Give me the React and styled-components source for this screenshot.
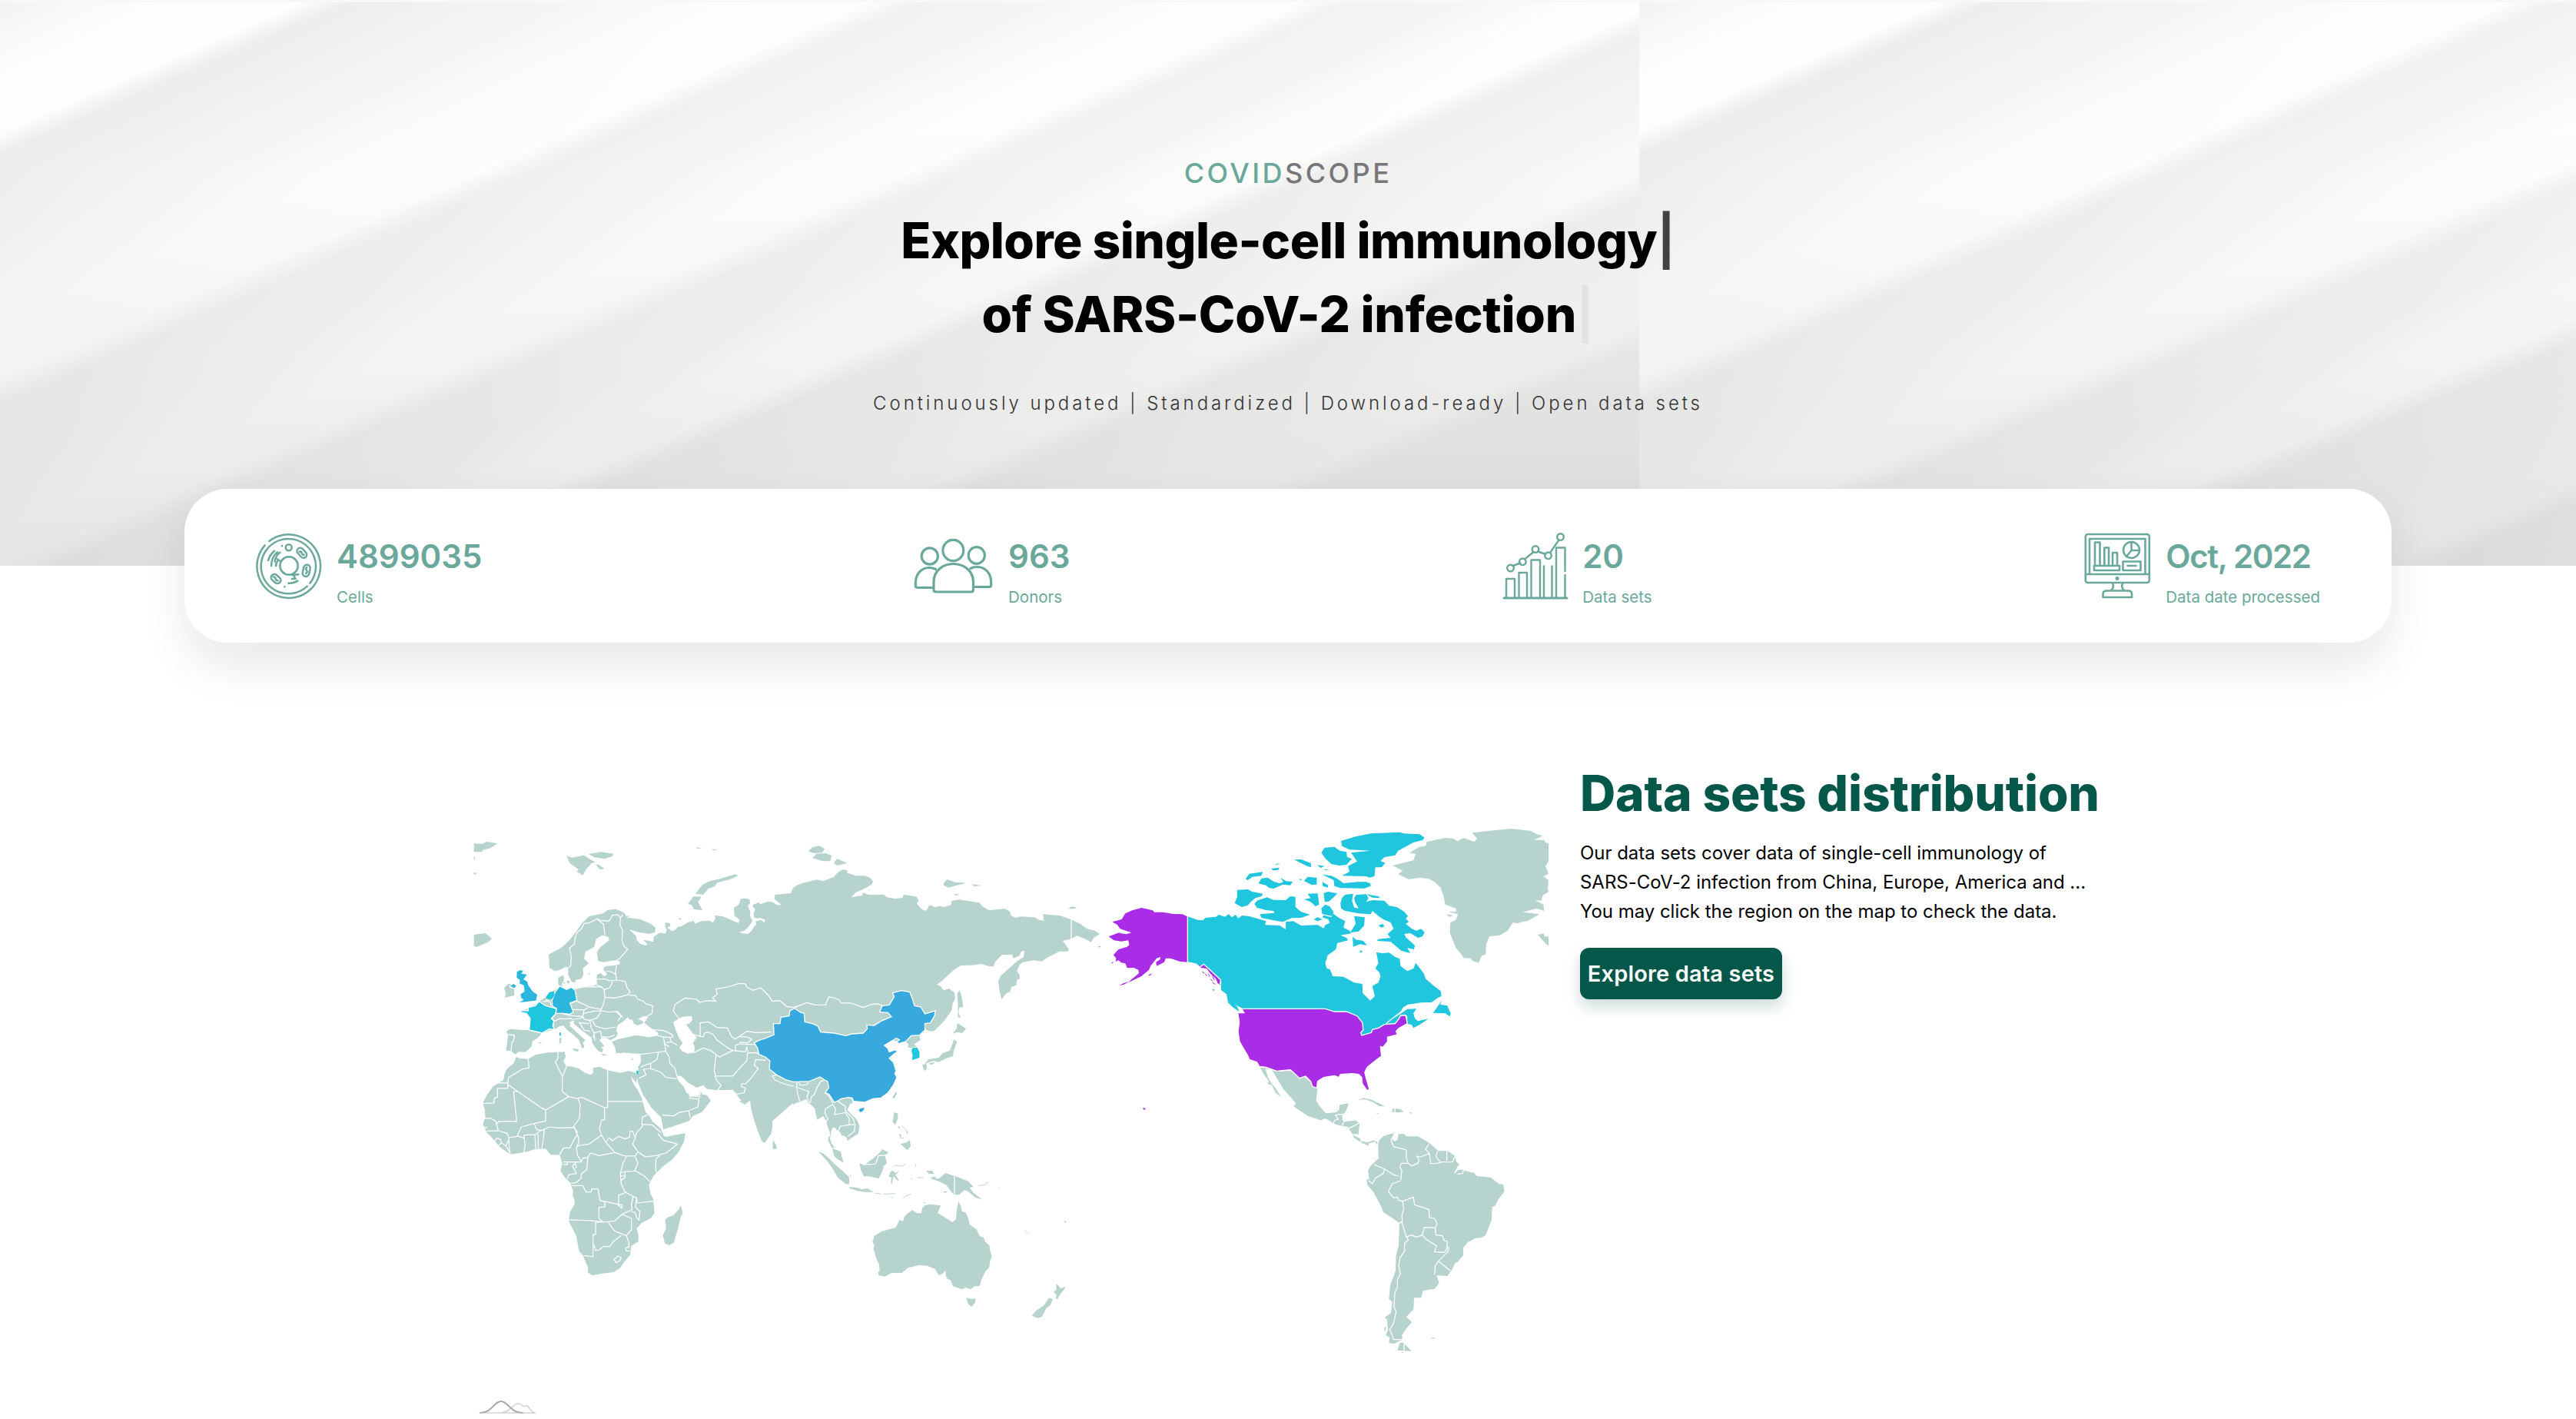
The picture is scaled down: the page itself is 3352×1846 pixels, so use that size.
import React from "react";
import styled, { createGlobalStyle } from "styled-components";

const teal = "#6ba89c";
const forest = "#045749";
const land = "#b7d3cd";
const cyan = "#20c5de";
const sky = "#2bb6de";
const blue = "#37a9df";
const purple = "#a92de6";

const GlobalStyle = createGlobalStyle`
  * { box-sizing: border-box; }
  body {
    margin: 0;
    background: #fff;
    font-family: Inter, "Liberation Sans", sans-serif;
  }
  h1, h2, p { margin: 0; }
`;

const Page = styled.main`
  display: flex;
  flex-direction: column;
  height: 1846px;
  overflow: hidden;
  background: #fff;
`;

const Hero = styled.header`
  display: flex;
  flex-direction: column;
  flex: none;
  align-items: center;
  height: 736px;
  border-top: 3px solid #f8f8f7;
  padding-top: 195px;
  background-image:
    linear-gradient(180deg, rgba(170, 170, 170, 0) 0%, rgba(170, 170, 170, 0.02) 30%, rgba(170, 170, 170, 0.12) 62%, rgba(170, 170, 170, 0.3) 100%),
    linear-gradient(
      156.4deg,
      #f3f3f2 0px, #fefefc 90px, #fefefc 155px,
      #eeeeed 182px, #f4f4f3 280px, #fdfdfb 380px, #fefefc 450px,
      #f1f1f0 480px, #f6f6f5 550px, #fefefc 630px, #fefefc 675px,
      #f2f2f1 704px, #f6f6f5 770px, #fdfdfb 820px, #fefefc 863px,
      #f0f0ef 892px, #f4f4f3 960px, #fafaf8 1030px, #fbfbf9 1058px,
      #efefee 1088px, #f6f6f5 1180px, #f8f8f7 1238px, #eeeeed 1266px
    );
  background-size: 100% 100%, 2133px 736px;
  background-repeat: no-repeat, repeat-x;
`;

const Brand = styled.p`
  font-size: 36px;
  font-weight: 500;
  line-height: 54px;
  letter-spacing: 3.45px;
  color: #77777a;
`;

const BrandAccent = styled.span`
  color: ${teal};
`;

const Title = styled.h1`
  margin-top: 13px;
  font-size: 64px;
  font-weight: 800;
  line-height: 96px;
  text-align: center;
  color: #000;
`;

const TitleLine = styled.span`
  display: block;
  letter-spacing: ${(p) => p.$tracking};
  white-space: nowrap;
`;

const Cursor = styled.span`
  font-weight: 700;
  color: ${(p) => (p.$faded ? "#e3e3e3" : "#424242")};
`;

const Tagline = styled.p`
  margin-top: 50px;
  font-size: 24px;
  font-weight: 300;
  line-height: 36px;
  letter-spacing: 3.92px;
  white-space: nowrap;
  color: #333;
`;

const StatsCard = styled.section`
  position: relative;
  display: flex;
  flex: none;
  justify-content: space-between;
  align-items: flex-start;
  height: 200px;
  margin: -100px 240px 0;
  padding: 57px 93px 0;
  border-radius: 56px;
  background: #fff;
  box-shadow: 0 30px 60px rgba(0, 0, 0, 0.09);
`;

const Stat = styled.div`
  display: flex;
  gap: 19px;
  color: ${teal};
`;

const StatIcon = styled.svg`
  width: ${(p) => p.$w}px;
  height: 86px;
  overflow: visible;
  fill: none;
  stroke: currentColor;
  stroke-width: ${(p) => p.$line || 3};
  stroke-linecap: round;
  stroke-linejoin: round;
`;

const StatText = styled.div`
  display: flex;
  flex-direction: column;
  padding-top: 1px;
  white-space: nowrap;
`;

const StatValue = styled.span`
  font-size: 42px;
  font-weight: 600;
  line-height: 60px;
  letter-spacing: ${(p) => (p.$tight ? "-1.4px" : "0")};
`;

const StatLabel = styled.span`
  margin-top: 8px;
  font-size: 20.5px;
  line-height: 30px;
`;

const Distribution = styled.section`
  display: flex;
  gap: 40px;
  padding: 156px 0 0 616px;
`;

const Map = styled.svg`
  flex: none;
  width: 1400px;
  height: 854px;
`;

const Area = styled.path`
  fill: ${(p) => p.$fill || land};
  stroke: ${(p) => (p.$edge ? "#fff" : "none")};
  stroke-width: 1.3px;
  vector-effect: non-scaling-stroke;
`;

const Border = styled.path`
  fill: none;
  stroke: #fff;
  stroke-width: 1.25px;
  stroke-linejoin: round;
  vector-effect: non-scaling-stroke;
`;

const Coast = styled.path`
  fill: none;
  stroke: ${(p) => p.$color || land};
  stroke-width: ${(p) => p.$w || 1.2}px;
  vector-effect: non-scaling-stroke;
`;

const Intro = styled.div`
  display: flex;
  flex-direction: column;
  align-items: flex-start;
`;

const Heading = styled.h2`
  font-size: 64px;
  font-weight: 800;
  line-height: 80px;
  letter-spacing: -0.18px;
  white-space: nowrap;
  color: ${forest};
`;

const Copy = styled.p`
  margin-top: 19px;
  font-size: 24px;
  line-height: 38px;
  letter-spacing: -0.03px;
  white-space: nowrap;
  color: #000;
`;

const Explore = styled.button`
  width: 263px;
  height: 67px;
  margin-top: 28px;
  padding: 0;
  border: 0;
  border-radius: 12px;
  background: ${forest};
  box-shadow: 0 10px 20px rgba(4, 87, 73, 0.2);
  font: 600 29px/42px Inter, sans-serif;
  letter-spacing: 0.15px;
  white-space: nowrap;
  color: #fff;
`;

function CellIcon() {
  return (
    <StatIcon $w={86} $line={7.5} viewBox="24 22 258 258">
      <path d="M76 55A124 124 0 1 1 59 71" />
      <path d="M235 219A107 107 0 1 0 224 231" />
      <circle cx="153" cy="151" r="35" />
      <circle cx="152" cy="80" r="12" />
      <path d="M96 93Q78 108 72 130M108 98Q84 117 84 152M118 99Q99 113 98 135M108 134Q102 142 102 152M106 124l14 10" />
      <rect x="181" y="88" width="44" height="25" rx="12" transform="rotate(48 203 101)" />
      <path d="M194 96q8-1 9 6t9 6" />
      <rect x="198" y="157" width="46" height="26" rx="13" transform="rotate(-78 221 170)" />
      <path d="M222 157q-6 6 0 12t-3 12" />
      <rect x="81" y="189" width="42" height="26" rx="13" transform="rotate(42 102 202)" />
      <path d="M92 194q8 1 9 8t9 7" />
      <path d="M165 187l25-2M172 187l4 12M165 202h14M151 219q20 1 36-9" />
      <path d="M126 73v0.5M136 233v0.5" />
    </StatIcon>
  );
}

function DonorsIcon() {
  return (
    <StatIcon $w={102} $line={3.2} viewBox="1.5 -8 102 86">
      <ellipse cx="50.8" cy="15" rx="13.4" ry="13.6" />
      <ellipse cx="20.3" cy="22.5" rx="10.6" ry="10.6" />
      <ellipse cx="81.3" cy="21.5" rx="10.6" ry="10.8" />
      <path d="M25.5 66V56C25.5 42 37 32.5 51 32.5S77 42 77 56V66Q77 69 74 69H28.5Q25.500 69 25.500 66Z" />
      <path d="M28 39.500Q24 37.500 20 37.500C9 37.500 1.800 46 1.800 58V61Q1.800 63.500 4.500 63.500H25" />
      <path d="M73.500 38.500Q77 36.500 81.500 36.500C93 36.500 100.200 45 100.200 57V60Q100.200 62.500 97.500 62.500H77.500" />
    </StatIcon>
  );
}

function DataSetsIcon() {
  return (
    <StatIcon $w={84} $line={2.4} viewBox="0 0 84 86">
      <path d="M1 85H83" strokeWidth="3" />
      <path d="M4 84V60H15V84M20.500 84V52H31V84M36.500 84V35.500H48V84M53 84V43.500M63.500 84V43.500M69 84V19.500H80.500V50M80.500 55V84" />
      <path d="M12.500 43L22.500 39.500M28 34.500L39.500 25M45 24.500L55.500 28M61 26L72.500 9.500" />
      <circle cx="9.500" cy="46" r="4.300" />
      <circle cx="25.300" cy="37.800" r="4.300" />
      <circle cx="42" cy="21.600" r="4.300" />
      <circle cx="58.500" cy="29.800" r="4.300" />
      <circle cx="74.500" cy="5.500" r="4.300" />
    </StatIcon>
  );
}

function MonitorIcon() {
  return (
    <StatIcon $w={86} $line={2.6} viewBox="0.5 0 86 86">
      <rect x="1.300" y="2" width="83" height="63" rx="3" />
      <path d="M6.500 54V8H79V54M1.500 54H84" />
      <path d="M13.500 41.500V12.500H20V41.500M25.800 41.500V19.500H31.500V41.500M36.500 41.500V26H42.500V41.500M12.500 43H45.500V49H12.500Z" />
      <circle cx="61" cy="22.500" r="10.500" />
      <path d="M61 12V23L54.500 31M61 23H71.500" />
      <path d="M50 37.500H73V49H50ZM56 43H67" />
      <circle cx="42.500" cy="59.500" r="1.200" />
      <path d="M36.500 66Q39 71 34.500 75M49.500 66Q47 71 51.500 75M24 84V80Q24 75.500 29 75.500H57Q61.500 75.500 61.500 80V84Z" />
    </StatIcon>
  );
}

const stats = [
  { value: "4899035", label: "Cells", Icon: CellIcon },
  { value: "963", label: "Donors", Icon: DonorsIcon },
  { value: "20", label: "Data sets", Icon: DataSetsIcon },
  { value: "Oct, 2022", label: "Data date processed", Icon: MonitorIcon, tight: true },
];

function EuropeAndWestAsia() {
  return (
    <g transform="translate(600 1060) scale(0.33333)">
      <Area d="M1385 257L1340 266 1310 275 1295 288 1295 305 1225 312 1224 330 1240 343 1252 352 1232 352 1218 341 1200 338 1168 349 1163 342 1140 350 1138 358 1148 368 1142 385 1144 402 1158 404 1165 402 1188 410 1183 420 1170 410 1150 416 1152 428 1140 440 1135 452 1120 465 1095 462 1086 457 1105 453 1118 442 1135 420 1137 410 1128 395 1129 380 1120 355 1128 345 1126 330 1110 326 1092 328 1083 352 1065 362 1066 385 1068 395 1088 410 1082 423 1050 408 1020 396 990 393 993 405 983 420 970 413 940 415 912 425 908 413 885 420 860 435 845 438 835 450 822 454 815 446 805 442 818 432 815 424 798 420 796 435 803 448 798 464 776 460 752 476 750 496 735 492 712 488 728 506 718 510 700 503 686 490 684 474 656 448 700 460 735 465 757 458 759 440 740 425 700 408 663 403 645 402 660 393 645 396 636 382 605 368 572 371 555 385 540 388 500 396 470 425 450 455 425 487 400 512 380 525 342 545 345 598 365 610 385 605 408 593 418 598 418 625 432 652 445 655 447 645 470 640 478 620 475 600 498 580 492 572 480 562 485 535 520 515 527 485 550 470 575 476 578 490 545 515 530 535 535 570 555 575 600 568 620 572 620 582 600 588 570 590 555 597 558 608 568 617 567 626 558 630 545 618 530 625 530 645 530 660 515 668 495 668 450 680 430 675 410 682 396 672 393 660 402 645 400 625 380 635 378 655 385 672 365 685 345 692 330 712 305 728 295 738 262 752 255 760 232 765 235 773 255 775 270 795 268 840 240 840 190 836 177 845 183 860 180 890 175 920 195 922 212 935 225 925 250 926 275 905 278 885 300 870 316 852 345 842 365 838 385 825 400 822 412 838 440 860 460 878 470 905 472 912 482 905 475 890 485 878 465 862 440 838 425 825 425 808 440 803 440 815 455 828 480 848 510 870 512 890 522 905 535 922 550 928 555 915 545 905 560 905 550 890 540 880 550 868 570 872 583 880 605 868 612 855 605 840 612 820 632 808 650 790 660 800 668 799 675 815 690 822 712 812 705 802 690 797 715 785 730 790 715 812 745 835 768 850 770 862 735 868 680 860 650 868 615 875 588 885 600 905 605 930 630 930 680 935 700 935 703 960 693 985 688 1020 690 1045 710 1092 735 1130 745 1145 780 1180 785 1205 790 1228 830 1215 890 1195 905 1175 940 1160 960 1135 975 1115 960 1095 940 1090 935 1075 925 1100 890 1100 890 1090 880 1085 870 1062 850 1040 840 1018 860 1020 885 1045 920 1065 945 1055 960 1070 1000 1075 1060 1073 1075 1090 1085 1105 1095 1115 1085 1118 1108 1130 1128 1115 1132 1145 1140 1180 1160 1240 1175 1275 1185 1280 1210 1245 1215 1220 1215 1195 1250 1165 1295 1125 1320 1122 1345 1110 1365 1125 1385 1150Z" />
      <path fill="#fff" d="M828 810L850 795 865 788 900 785 903 800 890 815 878 818 895 840 905 855 920 870 905 890 912 905 910 928 885 932 862 922 852 908 865 890 850 870 838 840Z" />
      <Area $fill={sky} d="M232 606L218 612 217 635 230 645 228 658 245 665 248 690 232 700 235 715 245 722 228 732 292 725 297 702 280 690 262 665 258 650 243 643 257 623 235 620 242 610ZM192 668L205 660 215 668 208 676Z" />
      <Area $fill={sky} $edge d="M385 668L412 682 430 673 445 685 452 725 425 735 438 770 425 778 400 775 370 775 372 755 357 748 355 725 368 690Z" />
      <Area $fill={cyan} $edge d="M305 728L330 745 355 752 372 757 368 778 352 795 362 805 358 825 365 838 345 835 316 852 266 840 270 795 255 775 232 770 235 763 262 765 262 752 290 745Z" />
      <Area $fill={cyan} d="M362 690L365 702 357 718 345 720 330 714 345 692ZM384 850H390V862H384ZM684 998L692 1000 689 1018 684 1008ZM692 981H697V985H692Z" />
      <Area d="M168 676L183 661 195 660 188 668 190 676 208 680 207 705 170 713 175 700ZM50 468L95 462 120 482 105 498 62 515 50 513ZM412 160L430 167 480 158 500 172 525 185 510 188 490 210 475 236 452 222 458 213 425 190ZM498 153L545 145 595 152 590 162 560 172 520 166ZM525 193L537 195 560 210 542 214ZM50 112L82 114 100 105 142 112 115 130 85 137 80 145 50 145ZM50 225L65 228 50 233ZM50 160L56 170 50 177ZM915 308L940 275 965 260 1010 250 1070 232 1082 238 1050 252 1000 265 990 280 965 288 945 312ZM908 318L938 320 925 340 942 373 908 368 900 352 885 348ZM918 126L940 131 922 132ZM975 134L1000 134 988 139ZM850 402L862 405 852 411ZM967 381L980 388ZM384 870L392 872 390 892 383 892ZM435 912L458 914 457 925 440 920ZM545 932L572 937 555 940ZM660 955L675 950 670 957ZM412 648L424 648 422 658 414 657ZM398 653L408 655 402 660ZM300 888L318 888 308 892ZM498 618L505 620 498 624Z" />
      <Border d="M418 598L428 588 430 555 423 520 442 505 445 480 452 460 470 445 480 424 500 422 520 412 530 405 M530 405L545 412 578 415 590 392 612 390 622 402 632 390 M622 402L620 430 630 450 628 490 635 512 650 525 620 560 605 570 M530 407L555 425 562 470 M607 588L603 610 607 645 M568 610L585 612 603 622 M530 642L560 640 580 648 607 645 640 650 M592 650L580 675 558 682 M520 660L550 672 558 682 M640 650L648 675 660 690 650 703 600 715 560 712 M655 705L680 705 690 720 712 728 722 738 748 745 745 775 720 790 M450 672L490 672 550 672 M558 682L562 712 555 740 545 765 M452 725L425 737 M452 728L485 742 500 750 520 755 545 758 M438 760L480 762 500 750 M478 775L510 768 545 765 580 770 612 768 630 790 M605 768L625 785 612 805 M400 778L440 785 475 787 480 762 M475 787L480 797 500 803 530 793 545 770 M512 803L525 825 560 835 605 828 M503 803L508 830 520 855 515 870 M465 812L500 815 M440 798L465 795 475 790 M460 808L480 840 505 845 M520 850L545 845 548 865 575 868 600 860 M520 860L522 880 M370 775L355 795 365 805 385 795 405 797 430 795 437 800 M362 805L360 828 M330 722L345 727 352 745 M318 728L345 728 M266 840L316 852 M183 858L208 860 205 880 198 890 195 922" />
      <Border d="M768 862L795 868 828 868 M740 838L790 842 820 855 828 865 M790 870L795 895 812 905 M800 890L820 885 845 900 M815 870L822 890 M630 930L700 935 740 930 800 922 795 895 M798 922L812 945 815 970 835 990 842 1018 M770 928L765 955 740 970 722 975 700 985 M740 973L740 990 780 1005 800 1025 842 1030 M740 990L712 993 722 1015 695 1028 M850 795L828 765 835 740 875 715 920 720 930 732 965 725 995 728 982 715 1000 700 995 680 1040 672 1085 658 1110 660 1115 672 1140 685 1170 675 1200 705 1215 728 1245 725 1270 748 1300 752 1350 730 1385 730 M933 867L933 812 965 808 1000 830 1040 832 1055 865 1070 875 1090 862 1115 845 1150 850 1210 848 M900 855L915 860 945 867 950 852 965 848 985 858 1000 880 1045 912 1062 920 M1070 875L1085 865 1120 868 1135 876 1118 890 1090 888 1085 895 1070 900 1072 922 M1090 895L1150 897 M910 928L945 910 975 920 995 935 992 965 988 1000 995 1020 1060 1020 1090 985 1115 960 1118 930 1150 928 1165 935 M995 937L1010 945 1060 920 1110 925 1115 905 1120 925 M990 1018L1000 1040 1015 1055 1002 1075 M1190 958L1150 955 1145 978 1160 990 1130 1030 1110 1050 1095 1050 1095 1062 1110 1065 1105 1085 1075 1090 M1230 1015L1215 1020 1225 1035 1260 1050 1310 1062 1311 1045 M1312 1065L1320 1120 M1312 1062L1385 1078 M1325 1045L1350 1048 1355 1058 1322 1058Z M1345 1095L1360 1125 M785 1172L830 1175 850 1162 888 1155 925 1140 928 1110 890 1105 M888 1155L895 1182 M928 1110L935 1078" />
    </g>
  );
}

function EastAsia() {
  return (
    <g transform="translate(900 1060) scale(0.357143 0.33333)">
      <Area d="M360 310L370 285 400 268 455 253 480 258 518 243 535 222 553 213 570 218 565 226 598 238 632 238 650 245 661 260 655 272 630 288 600 302 580 322 620 316 625 304 645 312 700 311 712 322 740 327 768 325 772 312 800 316 820 320 828 335 820 345 835 365 850 375 858 370 866 352 885 360 905 356 918 360 945 352 947 336 975 331 1048 343 1060 358 1083 373 1140 366 1160 378 1163 392 1180 402 1200 397 1250 400 1265 410 1283 413 1280 388 1340 393 1380 407 1415 425 1440 445 1470 452 1487 465 1465 480 1455 497 1435 485 1405 472 1383 484 1352 492 1375 525 1370 533 1340 533 1300 555 1275 572 1245 568 1205 576 1195 585 1185 610 1195 625 1195 640 1185 645 1183 665 1165 672 1160 690 1145 698 1130 720 1122 690 1117 650 1125 630 1150 605 1185 572 1210 555 1212 530 1200 535 1195 550 1172 560 1168 545 1130 547 1105 575 1100 592 1080 590 1055 582 1020 587 980 588 950 610 910 650 893 662 908 670 918 685 940 678 945 685 957 692 960 715 950 740 948 762 920 805 885 842 870 845 852 838 842 850 830 865 833 880 810 895 820 905 800 910 788 908 790 895 778 885 700 880 560 1000 380 880 380 770 410 600Z" />
      <Area $fill={blue} $edge d="M228 890L245 880 270 872 300 858 298 815 322 815 325 790 355 785 358 765 375 755 395 770 410 775 412 808 440 815 460 825 470 848 520 852 562 862 585 855 625 852 640 835 638 820 665 822 690 805 728 788 715 772 685 770 695 745 720 742 738 710 732 695 765 686 795 692 805 720 812 745 835 750 850 777 888 765 885 785 870 812 850 815 850 840 830 860 800 862 780 885 755 893 748 885 757 878 745 872 725 885 702 900 715 912 720 925 740 918 752 923 735 935 720 950 735 965 745 1000 740 1010 748 1025 735 1055 715 1085 690 1105 660 1108 630 1122 590 1118 585 1105 570 1103 545 1108 535 1115 520 1122 500 1090 487 1085 500 1065 495 1040 485 1035 468 1023 430 1040 370 1042 345 1035 310 1015 283 992 285 960 268 945 245 935 240 910Z" />
      <Area $fill={blue} d="M608 1152L615 1146 630 1143 625 1155 615 1162Z" />
      <Area $fill={cyan} d="M805 910L822 909 830 925 830 948 803 957 805 940 801 920Z" />
      <Area d="M425 142L440 127 465 121 485 133 475 148 445 150ZM440 168L455 152 490 150 510 160 505 181 475 180ZM518 188L530 172 567 188 530 198ZM918 268L930 252 960 263 1000 266 960 277 935 284 918 275ZM1020 271L1057 276 1030 279ZM957 308L980 312 960 314ZM1372 366L1385 358 1405 362 1390 367ZM640 293L652 293 645 296ZM975 685L982 700 990 750 975 752 972 770 980 792 970 790 970 740 968 700ZM968 812L1000 835 985 852 965 848 950 855 965 835ZM955 876L967 885 955 920 952 942 925 952 900 965 880 960 848 973 862 955 900 948 915 930 940 920 950 895ZM840 975L855 972 857 990 848 1000 843 985ZM865 970L885 965 882 972 868 976ZM745 1080L748 1085 740 1105 733 1108 735 1095Z" />
      <Border d="M375 752L420 733 450 742 488 742 500 710 535 720 545 735 580 735 625 752 655 740 680 738 695 745 M1383 405V486" />
    </g>
  );
}

function Africa() {
  return (
    <g transform="translate(600 1340) scale(0.33333)">
      <Area d="M215 105L225 110 262 113 290 97 340 88 378 86 405 85 405 95 410 100 400 122 410 140 430 142 460 150 480 165 505 175 515 168 515 148 540 143 572 157 620 167 655 160 680 166 690 180 683 205 662 180 670 205 690 235 705 265 712 290 720 320 735 335 745 355 780 385 785 398 790 412 800 417 830 410 876 403 870 435 850 475 825 505 790 530 765 555 750 570 740 590 733 605 740 640 750 660 755 715 740 735 705 752 685 775 692 800 692 825 665 842 660 878 640 900 620 930 595 945 550 950 512 958 495 945 495 925 475 880 460 860 450 805 435 775 420 745 425 710 443 680 443 665 435 645 438 630 430 610 428 598 405 575 388 550 395 520 385 487 350 487 330 463 290 465 245 478 192 485 150 455 125 425 100 400 85 365 95 340 92 310 85 285 100 255 125 220 165 195 170 170 180 150 205 130ZM858 685L866 718 858 725 848 770 830 830 812 840 795 832 788 800 800 775 797 740 805 732 830 722 850 700ZM1218 428L1233 455 1230 465 1216 463Z" />
      <Border d="M262 113L265 148 240 152 185 185 182 212 320 308 330 312 420 260 395 240 395 180 368 125 378 110 378 86 M130 207H182V228H142V262L130 265 128 285 85 287 M320 305L330 312V355L285 365 235 378 218 415 187 420 M182 212L222 240H205L217 357H145L142 365 M90 345L115 345 135 355 145 390 M100 395L145 393 180 403 187 425 187 450 192 485 M85 380H102 M395 185L412 140 M420 260L455 268 470 262 560 303 560 350 548 352 540 385 548 410 565 438 M572 157V303L560 303 M572 278L710 279 M455 265L465 290 462 345 440 375 458 420 460 437 M285 365L295 388 315 392 345 378 380 382 440 380 455 400 M325 385L322 420 315 463 M288 410L292 465 M300 405L302 465 M245 410L290 408 310 392 M245 410L250 450 245 478 M218 412L245 422 M455 405L440 430 425 460 400 460 385 485 M460 435L450 460 455 490 470 515 400 515 M452 455L462 450 500 445 548 410 M470 510L475 500 495 497 505 480 540 490 600 478 565 438 M600 478L640 492 680 492 690 475 670 445 680 420 670 395 660 395 658 418 640 425 615 415 590 432 578 420 565 438 M678 425L685 400 705 380 710 368 745 370 780 400 M705 370L708 340 730 330 M690 475L720 495 760 490 800 480 845 445 790 430 768 405 M775 490L760 505 760 550 765 556 M680 495L690 520 678 548 715 570 738 592 M678 550L640 552 622 558 632 520 645 495 M640 552V575L622 590 M620 570L640 568 M622 558L625 600 640 632 670 648 685 655 688 675 750 668 M445 520L435 530 450 560 420 565 415 580 M398 525H415V515H445L450 540 M495 495L490 545 470 560 468 580 450 595 430 598 M430 607H475L488 632H508L510 620H535L542 665 560 670 562 690 538 692V735L552 748 497 743 420 741 M560 668L610 680 628 695V682L615 680V645L640 635 M672 650L665 680 668 700 630 718 600 745 552 750 M685 658L680 690 698 708 695 742 685 732 680 712 665 708 M575 752L600 785 645 802 665 780 665 735 630 720 M525 750V798H515V885L478 880 M525 752L555 748 M518 838L525 860 540 858 555 845 580 845 595 825 625 802 M645 802L655 830 655 850 M597 895L612 882 625 888 620 900 605 908Z M655 845L642 852 645 863 660 862 M130 435L140 422 155 428 158 440 145 452 M158 440L175 452 185 430 M175 452L190 478" />
    </g>
  );
}

function SouthEastAsiaAndOceania() {
  return (
    <g transform="translate(1000 1340) scale(0.33333)">
      <Area d="M95 292L115 280 145 265 155 285 165 290 180 305 190 350 215 335 225 360 240 400 232 430 250 465 255 490 270 505 293 518 285 490 282 475 262 465 248 445 240 425 245 395 250 380 262 382 265 390 275 392 285 410 300 415 305 420 308 433 325 420 350 405 355 375 345 350 325 330 308 312 318 290 332 280 300 180 200 180 100 200Z" />
      <Area d="M195 475L215 482 240 505 260 525 295 555 315 575 315 602 300 600 270 575 250 540 230 512ZM316 612L345 615 365 622 385 618 410 632 375 632 345 627 318 618ZM355 520L375 528 385 518 410 500 430 482 445 465 468 478 455 490 462 520 450 530 445 550 430 580 400 572 372 570 360 545ZM475 555L485 548 495 558 512 550 495 565 510 588 500 585 488 570 482 600 478 600 480 575 470 572ZM490 322L505 325 505 345 495 370 485 360 488 340ZM515 445L535 440 552 430 555 455 542 468 530 458ZM510 405L518 408 515 425ZM540 392L545 405 538 402ZM505 375L515 380 508 384ZM615 550L640 548 645 562 625 560ZM632 575L650 572 655 580 668 578 690 558 735 572 780 590 800 612 785 615 800 635 835 662 805 652 780 630 765 625 745 643 725 643 710 628 695 605 665 590 640 582ZM742 668L752 690 755 708 770 712 780 735 785 760 812 778 825 805 840 810 845 825 862 840 866 865 872 885 865 900 862 925 845 945 830 978 825 998 805 1000 788 1012 770 1005 755 1012 720 1000 712 978 695 968 690 940 680 950 665 957 650 932 620 920 590 917 545 928 520 948 480 948 455 962 430 958 428 945 434 940 432 915 420 890 415 870 410 855 412 838 406 828 412 805 440 787 497 770 512 740 525 747 530 730 540 718 562 703 580 715 597 715 600 695 610 685 630 680 673 685 660 713 690 732 718 750 732 738 735 700ZM772 1045L790 1050 808 1047 806 1065 792 1080 780 1070ZM1103 967L1115 978 1117 982ZM1122 990L1130 995 1140 1008 1160 1002 1150 1018 1140 1030 1128 1050 1120 1048 1125 1035 1113 1022 1125 1012ZM1095 1045L1110 1050 1100 1075 1085 1085 1068 1118 1052 1124 1028 1115 1045 1095 1075 1075ZM1153 748L1158 744 1163 748 1158 752ZM615 560L622 562ZM680 630L700 630 690 636Z" />
      <Coast d="M415 636L440 640M450 640L495 638M478 652L486 656M525 655L540 646 557 641M490 528L520 531 537 524M820 607L845 604 858 592M1000 782L1018 796M580 576L605 576M556 580H562M895 613L899 616M520 375L535 388 543 400M515 420L528 422M572 522L576 532M606 674H614M316 565L322 572" $w={0.9} />
      <Border d="M370 525H400L418 522 430 490 458 489 M726 570V645 M222 195L205 200 190 222 180 250 168 260 163 285 M110 205L112 240 122 278 M105 222L158 240 150 262 160 285 M118 205L125 216 150 213 157 205 M220 246L235 255 250 285 M250 290L222 308 220 325 232 345 222 365 235 400 240 415 M250 290L262 308 258 330 300 322 315 345 315 370 280 375 275 390 M268 270L280 285 300 298 300 315 330 345 338 370 335 395 310 415 M315 370L338 368 M250 460L270 468 M222 350L228 380 M330 280L325 265 305 262 285 270 270 268 252 283" />
    </g>
  );
}

function NorthAmerica() {
  return (
    <g transform="translate(1420 1060) scale(0.395413 0.33333)">
      <Area d="M1253 70L1380 54 1445 62 1465 75 1485 82 1458 98 1490 98 1495 108 1505 112V180L1495 200 1505 230 1488 240 1505 255 1502 290 1505 300 1485 315 1482 335 1460 333 1488 350 1490 375 1465 365 1420 380 1475 388 1440 412 1400 424 1388 420 1370 452 1345 470 1310 475 1300 505 1298 545 1285 550 1275 578 1255 570 1248 560 1225 558 1215 540 1200 520 1180 460 1182 420 1200 410 1207 388 1175 378 1200 378 1202 366 1165 350 1160 320 1150 285 1130 262 1110 250 1080 245 1045 252 1010 232 1025 218 992 198 1060 178 1068 153 1048 148 1080 125 1100 122 1105 105 1165 90 1190 92 1205 103 1225 90 1260 105 1270 92ZM1470 468L1488 463 1492 475 1505 475V512L1485 490ZM1168 388L1190 392 1180 399Z" />
      <Area $fill={cyan} d="M317 397L350 410 368 412 375 402 410 398 420 390 440 398 452 387 462 400 475 390 484 404 496 393 520 396 575 415 572 430 620 432 640 447 640 418 665 415 690 432 745 430 765 443 770 430 785 422 780 408 760 400 765 392 790 400 795 385 815 402 835 415 830 440 850 452 855 463 820 470 840 480 845 490 810 500 805 525 778 548 770 580 775 600 785 602 795 630 830 632 865 655 892 660 893 695 918 725 933 708 925 668 945 655 952 630 948 615 935 600 945 578 938 537 960 540 980 538 1000 555 1015 562 1018 590 1040 610 1060 600 1068 578 1095 620 1100 640 1125 665 1150 688 1152 708 1140 715 1120 732 1085 733 1045 740 1025 755 1020 768 995 793 970 815 985 800 1020 775 1040 758 1070 757 1060 775 1065 795 1075 805 1110 796 1080 820 1060 832 1055 820 1040 815 1040 785 1030 779 1018 783 1010 800 1000 813 985 815 965 818 945 832 925 838 920 850 890 860 888 850 895 840 892 810 875 785 840 768 800 768 770 757 500 757 480 745 450 730 445 700 428 685 425 645 395 610 370 583 355 592 340 580 317 575Z" />
      <Area $fill={cyan} d="M1155 722L1148 740 1172 745 1175 755 1183 775 1180 787 1165 775 1125 773ZM447 730L465 735 480 748 487 768 465 750ZM398 680L406 682 403 688ZM822 102L870 85 920 73 1015 68 1030 73 1080 76 1096 88 1092 98 1060 108 1010 140 1000 158 965 165 952 180 968 188 955 205 935 205 933 225 932 240 915 245 905 240 825 238 850 222 845 200 858 192 875 182 862 160 855 148 918 140 850 136 825 122ZM757 148L768 128 800 125 818 140 840 145 842 165 858 172 840 195 815 198 790 192 770 170ZM760 233L790 238 810 250 830 267 875 262 905 262 918 268 920 278 900 287 820 286 800 278 798 255ZM668 175L690 174 722 188 724 205 710 200ZM742 196L768 200 755 207ZM765 212L785 214 770 216ZM592 210L620 206 615 215 598 217ZM603 193L622 190 612 195ZM508 250L520 230 565 223 560 238 530 242 515 255ZM550 268L560 248 580 245 600 260 620 268 632 262 622 245 640 258 663 262 655 275 630 272 600 288 585 285 575 275ZM700 258L712 242 742 245 742 272 725 273ZM683 250L695 252 688 256ZM760 262L780 275 778 284 762 278ZM480 293L515 291 530 300 565 308 560 318 540 325 525 340 515 353 495 360 472 345 480 320ZM537 348L545 335 578 322 600 332 640 333 655 318 672 320 672 360 690 378 720 390 690 402 660 403 630 418 600 412 560 402 555 388 603 383 600 375 575 372 545 362ZM700 330L722 325 712 308 745 307 750 350 738 357 722 340ZM765 305L780 300 810 307 795 325 782 338 768 340ZM757 365L770 350 785 358 798 380 790 395 760 387ZM732 408L745 400 760 408 745 415ZM820 345L825 325 835 312 862 308 858 335 865 362 880 365 868 340 865 325 872 312 905 310 912 325 905 340 925 333 965 335 980 355 1005 360 1030 378 1042 395 1035 405 1045 418 1035 425 1055 445 1070 452 1085 445 1097 458 1090 475 1075 480 1050 462 1030 465 1035 478 1065 510 1062 525 1040 520 1050 540 1020 530 985 495 940 492 945 485 985 480 975 465 995 445 985 420 965 410 950 400 925 375 920 388 880 385 835 375 822 365ZM905 310L945 318 950 325 925 323ZM865 395L900 400 898 432 880 455 852 460 870 425ZM860 475L870 487 895 492 908 510 885 505 862 515ZM945 433L958 425 965 435 955 440ZM883 530L893 530 887 540Z" />
      <Border d="M970 815L985 800 1020 768 1028 752 1045 740" />
      <Area $fill={purple} $edge d="M482 772L503 773 495 757H770L800 768 840 768 875 785 892 810 895 840 887 850 890 861 922 850 925 838 945 832 965 818 1000 815 1012 797 1018 783 1035 783 1040 815 1012 833 1003 845 1008 858 975 868 975 885 960 907 952 905 955 942 940 955 908 985 900 1005 905 1030 915 1070 908 1077 892 1050 890 1025 880 1013 860 1010 820 1013 815 1025 800 1018 765 1025 745 1040 742 1067 728 1060 722 1040 705 1020 685 1028 665 1005 655 995 610 1000 575 985 553 982 545 965 520 955 515 940 500 910 488 885 483 845 487 810Z" />
      <Area $fill={purple} d="M316 397L300 388 270 387 235 380 208 380 202 373 165 363 135 373 112 385 100 408 69 418 85 428 95 445 132 460 115 466 95 462 92 460 57 475 75 490 98 494 122 490 125 508 118 515 90 525 73 547 82 560 80 573 90 568 98 577 112 580 118 598 140 597 155 605 157 618 130 645 122 655 165 630 190 605 195 590 215 560 228 555 226 565 213 575 215 590 240 575 245 560 260 560 290 572 316 575ZM340 580L360 590 370 583 395 610 425 645 422 660 415 655 410 640 390 617 380 600 360 597 345 582ZM88 668L105 658 125 650 108 662 92 666ZM185 628L200 618 195 626ZM66 576L74 574 70 580ZM25 514H29V517H25ZM170 1143L180 1147 172 1152Z" />
      <Coast $color={purple} d="M365 612L372 618M375 622L382 628M385 620L390 632M392 640L400 650M398 628L405 645M400 655L408 662M415 655L424 662" $w={1} />
      <Border d="M317 396V575L345 582 358 595 370 583 395 610 425 643 427 662" />
    </g>
  );
}

function LatinAmerica() {
  return (
    <g transform="translate(1600 1360) scale(0.33333)">
      <Area d="M120 87L135 87 185 102 240 99 260 112 272 130 292 122 318 145 343 170 338 215 350 235 375 265 415 262 428 250 430 232 465 226 455 255 443 270 440 290 447 298 475 295 495 293 507 305 503 350 490 348 485 352 508 362 518 375 540 378 560 370 578 377 575 388 568 376 545 382 542 392 515 380 485 360 483 350 465 325 435 315 408 305 375 285 355 292 305 275 250 238 258 225 210 170 165 95 140 92 150 125 165 150 185 175 202 203 180 185 165 155 148 150 153 140 132 110ZM580 385L585 370 600 355 645 338 632 365 645 375 655 368 660 345 680 345 690 355 735 355 770 375 785 385 815 412 850 412 878 430 886 455 896 463 875 500 895 483 915 488 955 498 965 510 1020 515 1050 540 1068 542 1073 570 1050 600 1035 627 1025 630 1023 680 1000 740 985 750 960 752 930 768 912 790 912 820 890 845 880 850 868 875 850 900 808 897 818 928 800 950 755 957 748 985 720 985 718 1030 690 1060 712 1080 690 1105 673 1130 675 1148 660 1155 640 1165 622 1160 625 1140 610 1130 618 1110 615 1070 605 1062 630 1045 635 1000 622 990 627 935 648 880 650 820 660 780 663 693 600 650 590 625 560 570 538 545 535 525 545 520 540 490 550 470 582 440 580 400ZM665 1160L678 1160 712 1193 655 1190ZM500 213L525 205 555 212 608 238 585 237 560 222 530 210ZM635 247L645 246 665 248 680 258 660 262 635 260ZM702 261L711 261 709 266 702 265ZM572 263L584 265 578 268ZM783 1141L803 1140 795 1145ZM605 1100L611 1100 608 1115 604 1112ZM668 1197L682 1198 675 1201Z" />
      <Area d="M890 490L900 482 913 485 910 497 895 498Z" />
      <Border d="M630 340L645 345 630 368 640 395 690 408 690 440 697 460 670 460 665 475 672 490 668 525 M660 510L640 505 605 482 565 465 M605 482L600 500 570 517 558 540 543 527 M668 528L635 540 620 570 640 595 655 592 660 605 675 608 718 592 722 622 778 640 780 672 800 675 810 695 803 712 760 710 752 740 765 755 808 782 800 805 838 808 848 795 M675 608L680 640 672 665 675 685 662 695 M803 712L805 740 830 742 838 762 850 765 848 795 M848 785L856 790 852 805 815 842 M672 688L680 715 690 748 710 740 730 748 752 740 M690 748L698 760 683 772 683 802 665 830 660 860 667 890 655 915 655 945 645 965 642 1020 650 1040 640 1085 625 1110 635 1130 640 1148 675 1148 M815 842L862 880 M815 842L803 860 800 895 M697 460L710 470 735 460 740 448 730 432 745 435 780 422 785 460 800 462 830 455 870 455 880 432 M778 385L765 405 782 425 M812 412L805 432 822 455 M848 412L848 450 M405 305L410 292 425 288 412 272 442 268 442 292 M435 318L447 298 M440 316L470 322 505 303 M483 348L503 348 M513 365L513 378 M645 246V262 M681 1155V1192 M878 498L890 485 915 482 910 500 890 502" />
    </g>
  );
}

function DistributionMap() {
  return (
    <Map viewBox="616 992 1400 854">
      <EuropeAndWestAsia />
      <Africa />
      <SouthEastAsiaAndOceania />
      <EastAsia />
      <LatinAmerica />
      <NorthAmerica />
      <g fill="none" strokeLinecap="round" strokeLinejoin="round">
        <path d="M655 1837C665 1836 668 1826 674 1826S681 1832 684 1829 690 1837 696 1838" stroke="#d2d2d2" strokeWidth="1.6" />
        <path d="M625 1838C640 1838 643 1823 652 1823S664 1838 680 1838" stroke="#a5a5a5" strokeWidth="2" />
        <path d="M624 1838H696" stroke="#bdbdbd" strokeWidth="1.2" />
      </g>
    </Map>
  );
}

export default function App() {
  return (
    <>
      <GlobalStyle />
      <Page>
        <Hero>
          <Brand><BrandAccent>COVID</BrandAccent>SCOPE</Brand>
          <Title>
            <TitleLine $tracking="-0.5px">Explore single-cell immunology<Cursor>|</Cursor></TitleLine>
            <TitleLine $tracking="-0.3px">of SARS-CoV-2 infection<Cursor $faded>|</Cursor></TitleLine>
          </Title>
          <Tagline>Continuously updated | Standardized | Download-ready | Open data sets</Tagline>
        </Hero>
        <StatsCard>
          {stats.map(({ value, label, Icon, tight }) => (
            <Stat key={label}>
              <Icon />
              <StatText>
                <StatValue $tight={tight}>{value}</StatValue>
                <StatLabel>{label}</StatLabel>
              </StatText>
            </Stat>
          ))}
        </StatsCard>
        <Distribution>
          <DistributionMap />
          <Intro>
            <Heading>Data sets distribution</Heading>
            <Copy>
              Our data sets cover data of single-cell immunology of
              <br />
              SARS-CoV-2 infection from China, Europe, America and ...
              <br />
              You may click the region on the map to check the data.
            </Copy>
            <Explore>Explore data sets</Explore>
          </Intro>
        </Distribution>
      </Page>
    </>
  );
}
